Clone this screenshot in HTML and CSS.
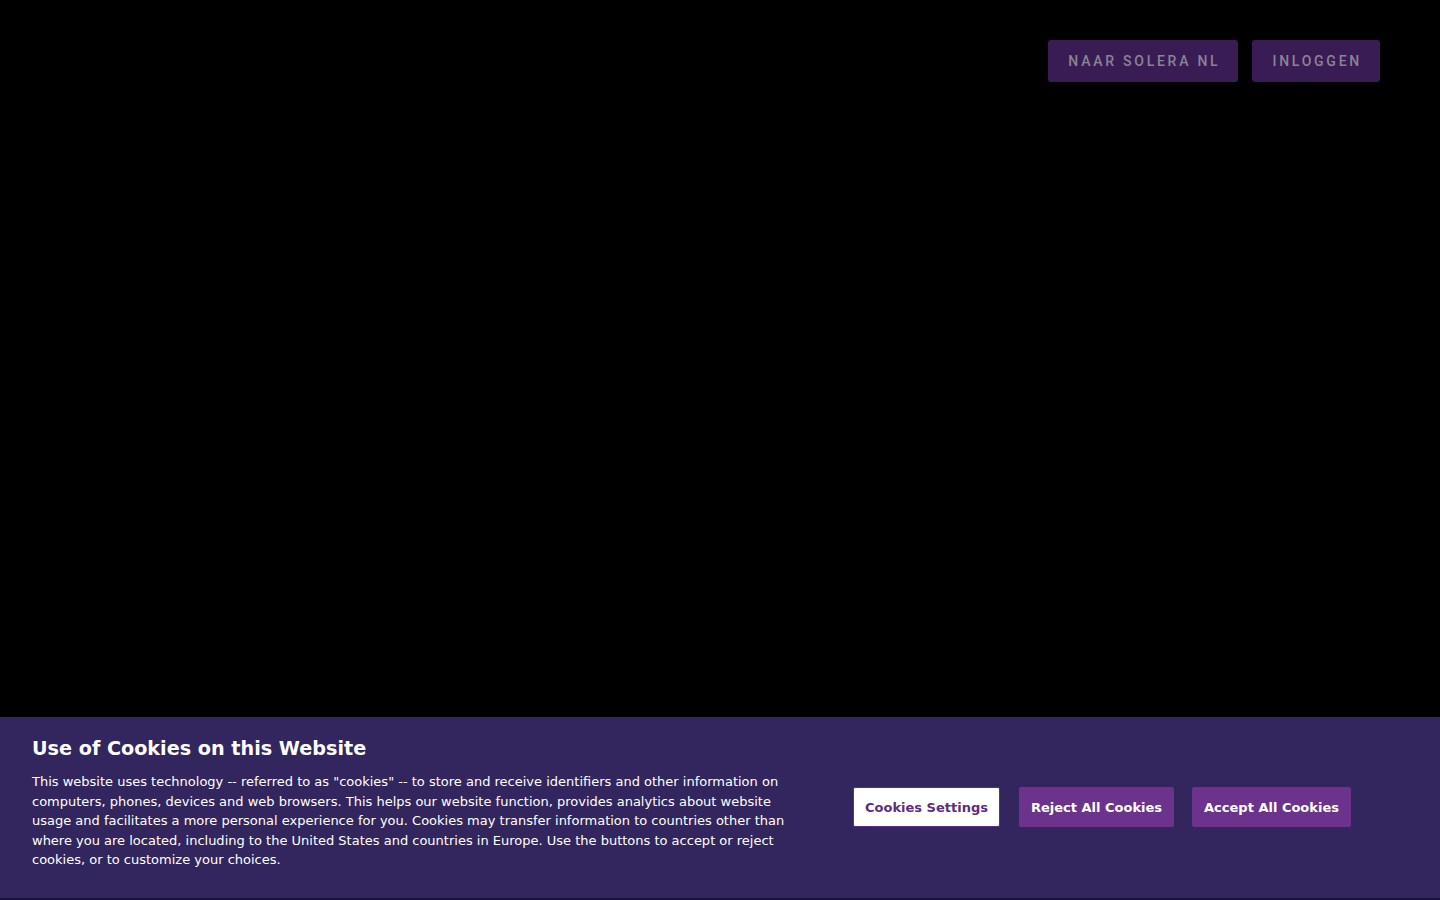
FILE: index.html
```html
<!DOCTYPE html>
<html lang="nl">
<head>
<meta charset="utf-8">
<title>Solera</title>
<link rel="stylesheet" href="styles.css">
</head>
<body>
<div class="page">
  <header class="topbar">
    <a class="top-btn" href="#">NAAR SOLERA NL</a>
    <a class="top-btn" href="#">INLOGGEN</a>
  </header>
  <main class="stage"></main>
  <section class="cookie-banner">
    <div class="cookie-text">
      <h2 class="cookie-title">Use of Cookies on this Website</h2>
      <p class="cookie-desc">This website uses technology -- referred to as "cookies" -- to store and receive identifiers and other information on computers, phones, devices and web browsers. This helps our website function, provides analytics about website usage and facilitates a more personal experience for you. Cookies may transfer information to countries other than where you are located, including to the United States and countries in Europe. Use the buttons to accept or reject cookies, or to customize your choices.</p>
    </div>
    <div class="cookie-actions">
      <button class="cbtn cbtn-outline">Cookies Settings</button>
      <button class="cbtn cbtn-fill cbtn-reject">Reject All Cookies</button>
      <button class="cbtn cbtn-fill">Accept All Cookies</button>
    </div>
  </section>
</div>
</body>
</html>
```

FILE: styles.css
```css
* { box-sizing: border-box; }
html, body { margin: 0; padding: 0; background: #000; }
body { height: 900px; overflow: hidden; font-family: "DejaVu Sans", sans-serif; }
.page { display: flex; flex-direction: column; height: 900px; }
.topbar {
  display: flex; justify-content: flex-end; gap: 14px;
  padding: 40px 60px 0 0; height: 82px;
}
.top-btn {
  display: flex; align-items: center; justify-content: center;
  height: 42px; padding: 0 18px 0 20px;
  background: #3a1c55; color: #8b8396;
  font-family: Roboto, "Liberation Sans", sans-serif; font-weight: 500;
  font-size: 14px; letter-spacing: 2.75px; text-decoration: none;
  border-radius: 3px;
}
.stage { flex: 1; }
.cookie-banner {
  height: 183px; background: #33255d;
  border-bottom: 2px solid #1c1538;
  display: flex; align-items: flex-start;
  padding: 20px 0 0 32px;
}
.cookie-text { width: 760px; }
.cookie-title {
  margin: 0; font-size: 19.2px; font-weight: 700; color: #fff;
  line-height: 24px;
}
.cookie-desc {
  margin: 11px 0 0; font-size: 13px; line-height: 19.5px; color: #fff;
}
.cookie-actions {
  display: flex; gap: 18px; margin: 50px 0 0 61px;
}
.cbtn {
  height: 40px; padding: 0 11px; font-family: "DejaVu Sans", sans-serif;
  font-size: 13px; font-weight: 700; border-radius: 2px; cursor: pointer;
}
.cbtn-reject { margin-left: 1px; }
.cbtn-outline { background: #fff; color: #5e2c84; border: 1px solid #5e2c84; }
.cbtn-fill { background: #6b338c; color: #fff; border: 1px solid #6b338c; }
```
